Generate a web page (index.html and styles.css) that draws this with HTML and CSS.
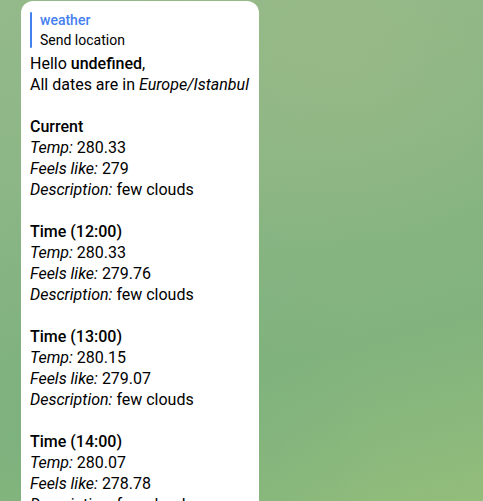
FILE: index.html
```html
<!DOCTYPE html>
<html lang="en">
<head>
<meta charset="utf-8">
<title>weather</title>
<link rel="stylesheet" href="styles.css">
</head>
<body>
<div class="chat">
  <div class="bubble">
    <div class="reply">
      <div class="reply-name">weather</div>
      <div class="reply-text">Send location</div>
    </div>
    <div class="message">
      <p>Hello <b>undefined</b>,<br>All dates are in <i>Europe/Istanbul</i></p>
      <p><b>Current</b><br><i>Temp:</i> 280.33<br><i>Feels like:</i> 279<br><i>Description:</i> few clouds</p>
      <p><b>Time (12:00)</b><br><i>Temp:</i> 280.33<br><i>Feels like:</i> 279.76<br><i>Description:</i> few clouds</p>
      <p><b>Time (13:00)</b><br><i>Temp:</i> 280.15<br><i>Feels like:</i> 279.07<br><i>Description:</i> few clouds</p>
      <p><b>Time (14:00)</b><br><i>Temp:</i> 280.07<br><i>Feels like:</i> 278.78<br><i>Description:</i> few clouds</p>
    </div>
  </div>
</div>
</body>
</html>
```
FILE: styles.css
```css
html, body {
  margin: 0;
  padding: 0;
  height: 100%;
  overflow: hidden;
}
body {
  font-family: Roboto, "Liberation Sans", sans-serif;
  background:
    radial-gradient(ellipse 60% 50% at 20% 85%, rgba(120, 175, 125, 0.6), rgba(120, 175, 125, 0) 100%),
    radial-gradient(ellipse 50% 40% at 70% 10%, rgba(155, 185, 135, 0.7), rgba(155, 185, 135, 0) 100%),
    linear-gradient(165deg, #94b98a 0%, #88b583 45%, #82b37e 70%, #92bd7b 100%);
}
.chat {
  display: flex;
  padding: 1px 0 0 21px;
}
.bubble {
  width: 238px;
  box-sizing: border-box;
  background: #ffffff;
  border-radius: 12px 12px 0 0;
  padding: 9px 9px 20px 9px;
  color: #000000;
}
.reply {
  position: relative;
  padding-left: 10px;
  font-size: 14px;
  line-height: 20px;
}
.reply::before {
  content: "";
  position: absolute;
  left: 0;
  top: 2px;
  bottom: 2px;
  width: 2px;
  background: #4580f0;
  border-radius: 1px;
}
.reply-name {
  color: #4580f0;
  font-weight: 500;
}
.reply-text {
  color: #000000;
}
.message {
  margin-top: 3px;
  font-size: 16px;
  line-height: 21px;
}
.message p {
  margin: 0 0 21px 0;
}
.message b {
  font-weight: 500;
}
```
